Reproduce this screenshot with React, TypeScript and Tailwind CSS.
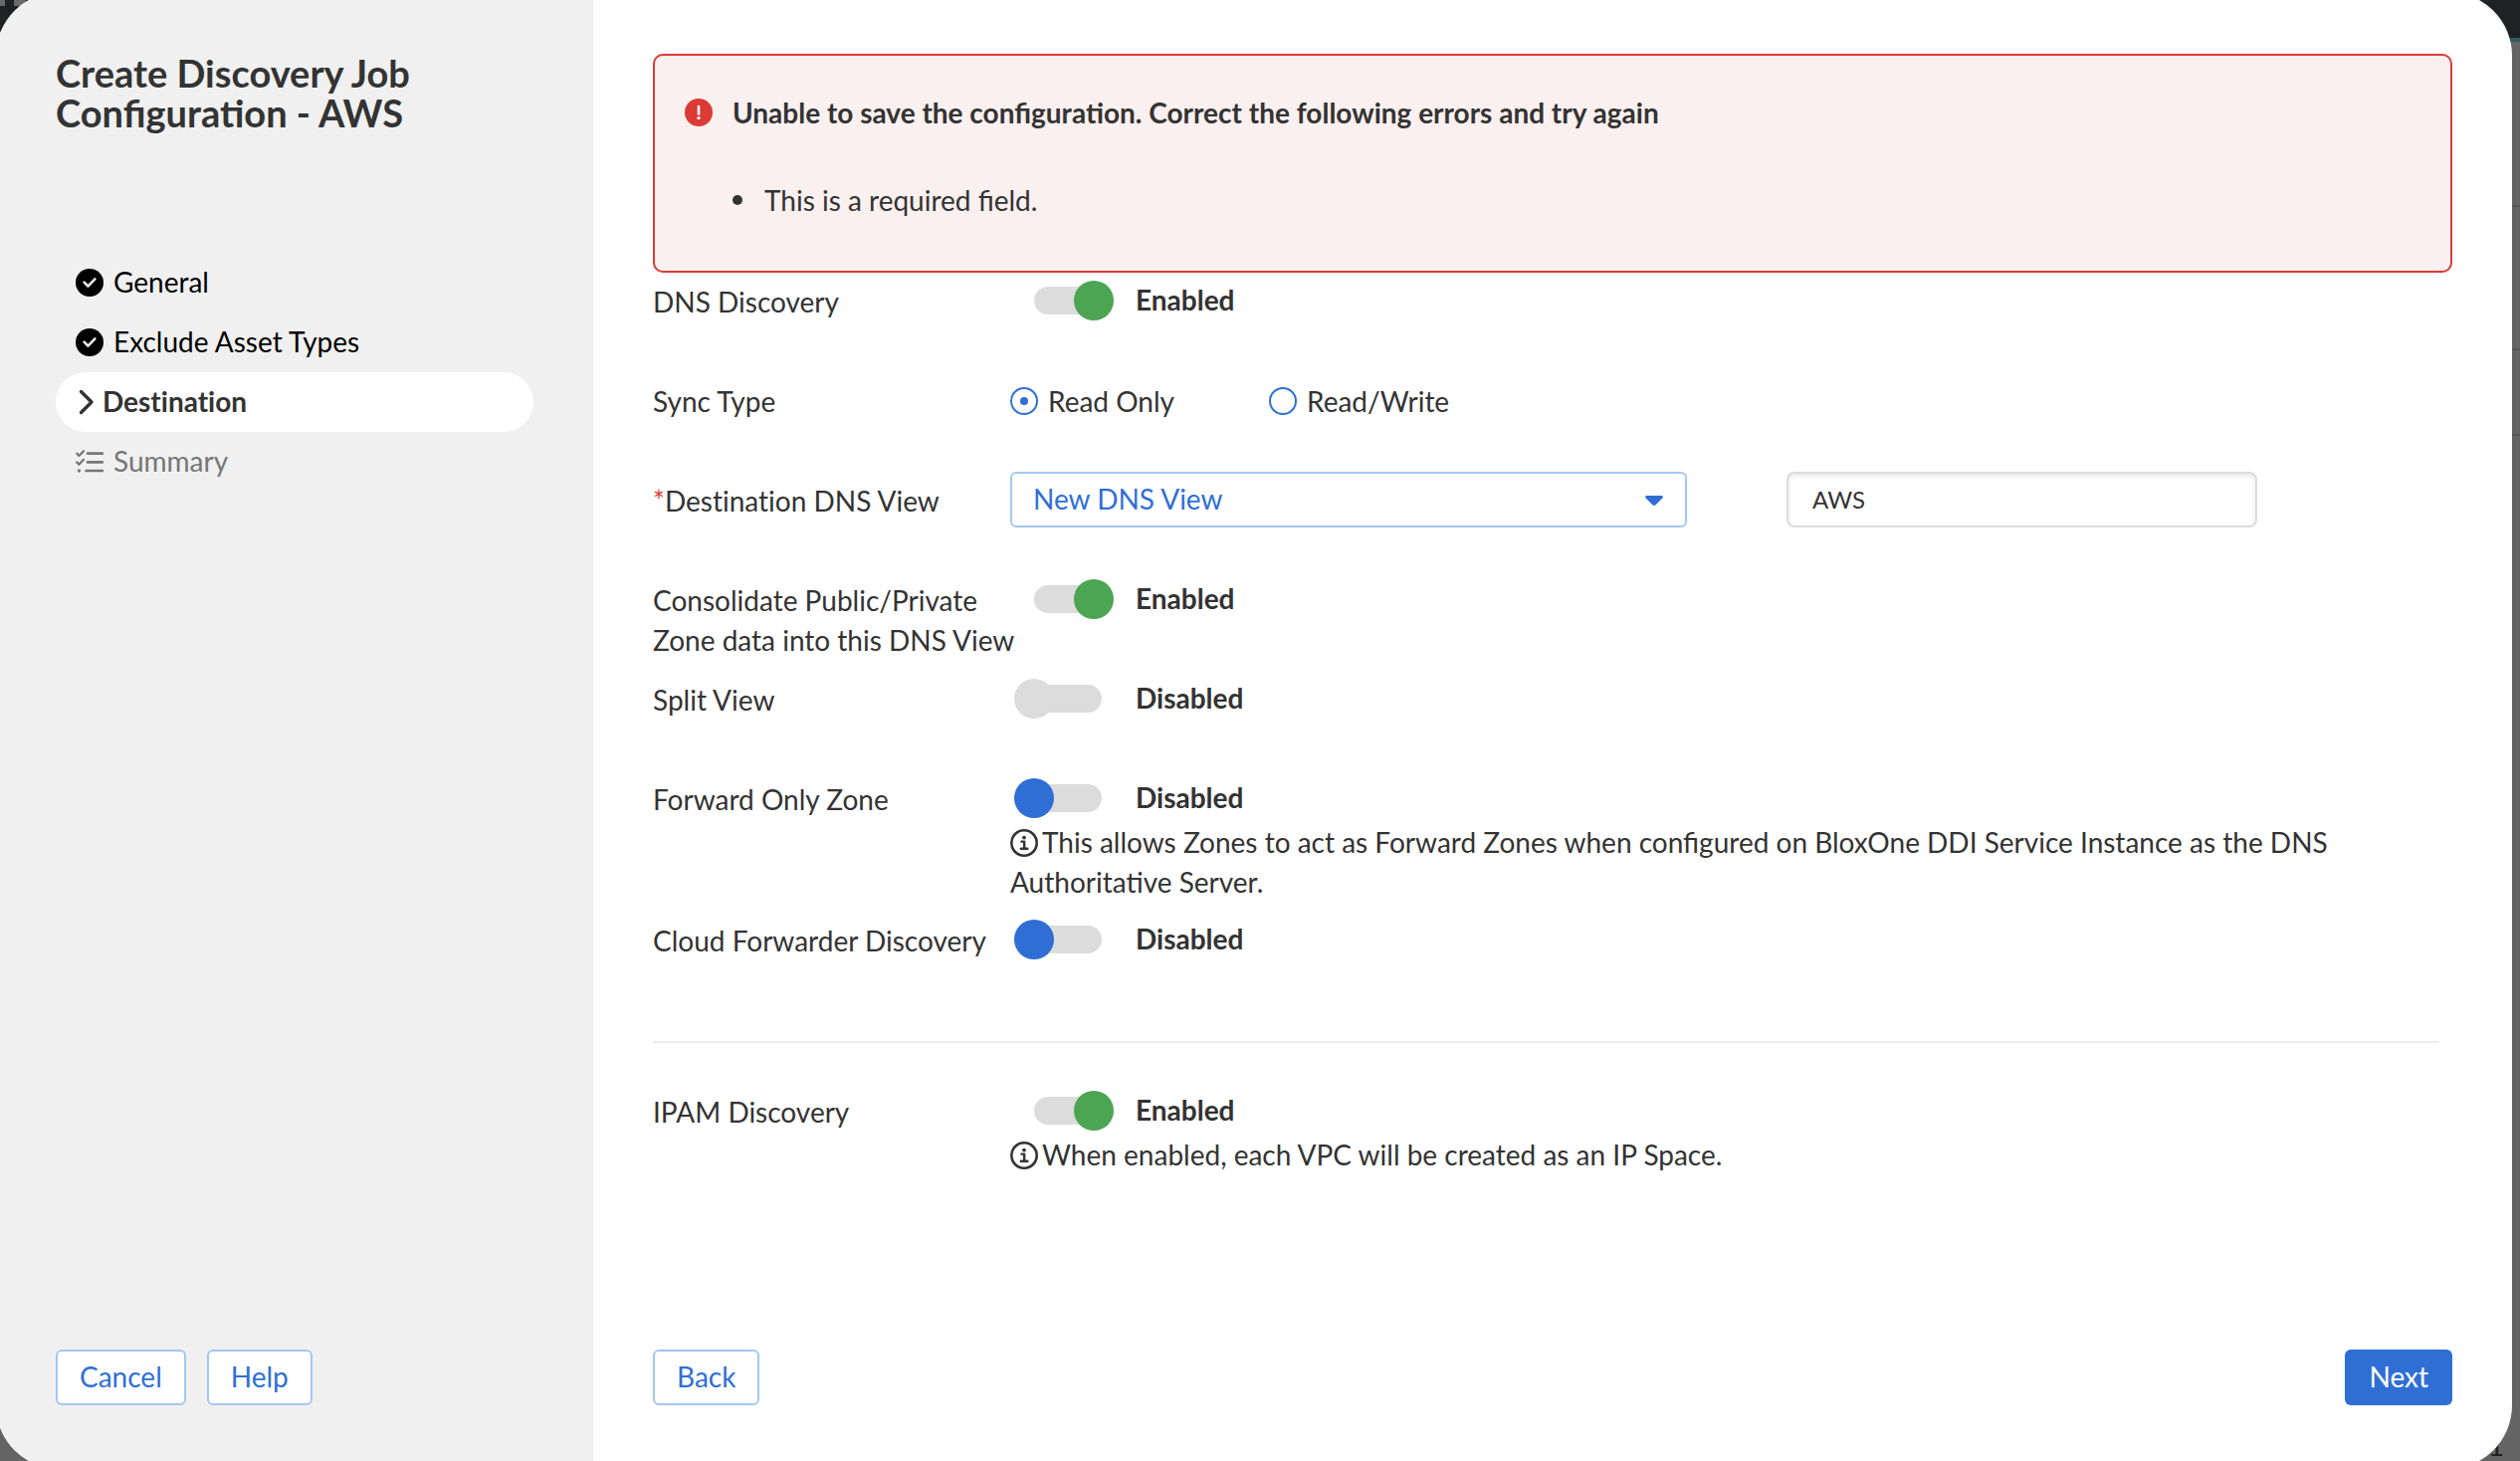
import React from "react";

function StepDone() {
  return (
    <svg viewBox="0 0 28 28" className="size-7 shrink-0" aria-hidden="true">
      <circle cx="14" cy="14" r="14" fill="#000" />
      <path d="M8.600 13.600l3.800 4 7-7.200" fill="none" stroke="#f0f0f0" strokeWidth="2.5" strokeLinecap="round" strokeLinejoin="round" />
    </svg>
  );
}

function StepCurrent() {
  return (
    <svg viewBox="0 0 16 26" className="h-[26px] w-4 shrink-0" aria-hidden="true">
      <path d="M2.500 2.500L13 13 2.500 23.500" fill="none" stroke="#333" strokeWidth="3.4" strokeLinecap="round" strokeLinejoin="round" />
    </svg>
  );
}

function StepPending() {
  return (
    <svg viewBox="0 0 28 24" className="h-6 w-7 shrink-0" fill="none" stroke="#767676" strokeWidth="2.6" strokeLinecap="round" strokeLinejoin="round" aria-hidden="true">
      <path d="M12 3.600h15M12 12.400h15M10.500 21h16.500" />
      <path d="M1.200 3.600l2.200 2.400L8 1.200M1.200 12.400l2.200 2.400L8 9.800" strokeWidth="2.2" />
      <circle cx="3.4" cy="21" r="1.7" fill="#767676" stroke="none" />
    </svg>
  );
}

function InfoIcon() {
  return (
    <svg viewBox="0 0 28 28" className="mr-1 -mt-1.5 inline-block size-7 align-middle" aria-hidden="true">
      <circle cx="14" cy="14" r="12.7" fill="none" stroke="#333" strokeWidth="2.6" />
      <circle cx="14" cy="8.6" r="1.9" fill="#333" />
      <path d="M11.400 12.600h2.800v7M10.800 19.800h6.600" fill="none" stroke="#333" strokeWidth="2.4" strokeLinecap="round" strokeLinejoin="round" />
    </svg>
  );
}

function Switch({ id, on, disabled }: { id: string; on?: boolean; disabled?: boolean }) {
  return (
    <div className="flex h-[52px] items-center pt-1 pl-6">
      <input
        id={id}
        type="checkbox"
        role="switch"
        defaultChecked={on}
        disabled={disabled}
        className="relative h-7 w-[68px] shrink-0 appearance-none rounded-full bg-[#dcdcdc] before:absolute before:-top-1.5 before:-left-5 before:size-10 before:rounded-full before:bg-[#2f6fd5] before:content-[''] checked:before:left-10 checked:before:bg-[#4ca553] disabled:before:bg-[#dcdcdc]"
      />
      <label htmlFor={id} className="pb-0.5 pl-[34px] font-bold">
        {on ? "Enabled" : "Disabled"}
      </label>
    </div>
  );
}

function Row({ label, htmlFor, children }: { label: React.ReactNode; htmlFor?: string; children: React.ReactNode }) {
  return (
    <div className="grid min-h-[100px] grid-cols-[359px_1fr]">
      <div className="pt-[9px] whitespace-nowrap [font-variant-ligatures:none]">
        {htmlFor ? <label htmlFor={htmlFor}>{label}</label> : <span>{label}</span>}
      </div>
      <div>{children}</div>
    </div>
  );
}

function Radio({ label, checked }: { label: string; checked?: boolean }) {
  return (
    <label className="flex w-[260px] items-center gap-2.5">
      <input
        type="radio"
        name="sync-type"
        defaultChecked={checked}
        className="grid size-7 appearance-none place-items-center rounded-full border-2 border-[#2f6fd5] before:size-2 before:rounded-full before:content-[''] checked:before:bg-[#2f6fd5]"
      />
      {label}
    </label>
  );
}

const outline = "h-14 rounded-md border-2 border-[#a3c7f2] bg-white px-[22px] pb-0.5 text-[#2f6fd5]";

export default function App() {
  return (
    <div className="relative min-h-screen overflow-hidden bg-[#646464] font-[Lato,sans-serif] text-[28px] leading-10 text-[#333]">
      <div className="absolute inset-x-0 top-0 flex h-[42px] gap-[9px] border-b-4 border-[#35595b] bg-[#1f2124]">
        <div className="h-1.5 w-[5px] bg-[#6a6a6a]" />
        <div className="h-1.5 w-3 bg-[#6a6a6a]" />
      </div>
      <div className="absolute top-[42px] right-0 w-2">
        <div className="h-[166px] border-b-2 border-[#555]" />
        <div className="h-36 border-b-2 border-[#555]" />
        <div className="h-[86px] border-b-2 border-[#555]" />
      </div>
      <div className="absolute right-4 bottom-0 leading-8 text-[#222]">1</div>

      <div className="relative -mt-2 mr-2 -mb-2 -ml-1 flex min-h-[calc(100vh+16px)] overflow-hidden rounded-[64px] bg-white">
        <aside className="flex w-[600px] shrink-0 flex-col bg-[#f0f0f0] pt-[61px] pr-[60px] pb-16 pl-[60px]">
          <h1 className="text-[38px] leading-10 font-bold">
            Create Discovery Job
            <br />
            Configuration - AWS
          </h1>
          <nav className="mt-[121px] [font-variant-ligatures:none]">
            <ol>
              <li className="flex h-[60px] items-center gap-2.5 pl-5 text-black"><StepDone /><span className="pb-0.5">General</span></li>
              <li className="flex h-[60px] items-center gap-2.5 pl-5 text-black"><StepDone /><span className="pb-0.5">Exclude Asset Types</span></li>
              <li aria-current="step" className="flex h-[60px] items-center gap-2 rounded-full bg-white pl-[23px] font-bold"><StepCurrent /><span className="pb-0.5">Destination</span></li>
              <li className="flex h-[60px] items-center gap-2.5 pl-5 text-[#767676]"><StepPending /><span className="pb-0.5">Summary</span></li>
            </ol>
          </nav>
          <div className="mt-auto flex gap-[21px]">
            <button type="button" className={outline}>Cancel</button>
            <button type="button" className={outline}>Help</button>
          </div>
        </aside>

        <main className="flex min-w-0 flex-1 flex-col pt-[62px] pr-[60px] pb-16 pl-[60px]">
          <div role="alert" className="h-[220px] rounded-[10px] border-2 border-[#dc3a35] bg-[#faf0ef] px-[30px] pt-[37px]">
            <div className="flex items-center gap-5 font-bold">
              <svg viewBox="0 0 28 28" className="size-7" aria-hidden="true">
                <circle cx="14" cy="14" r="14" fill="#dc3a35" />
                <path d="M14 8v7.400" stroke="#fff" strokeWidth="2.6" strokeLinecap="round" />
                <circle cx="14" cy="19.6" r="1.7" fill="#fff" />
              </svg>
              Unable to save the configuration. Correct the following errors and try again
            </div>
            <ul className="mt-12 pl-12">
              <li className="flex items-center gap-[22px] before:size-2.5 before:rounded-full before:bg-[#333] before:content-['']">This is a required field.</li>
            </ul>
          </div>

          <form className="mr-3.5">
            <Row label="DNS Discovery" htmlFor="dns"><Switch id="dns" on /></Row>
            <Row label="Sync Type">
              <div className="flex pt-[9px]">
                <Radio label="Read Only" checked />
                <Radio label="Read/Write" />
              </div>
            </Row>
            <Row
              htmlFor="view"
              label={<><span className="text-[#dc3a35]">*</span>Destination DNS View</>}
            >
              <div className="flex gap-[100px]">
                <div className="relative w-[680px]">
                  <select id="view" className="block h-14 w-full appearance-none rounded-md border-2 border-[#a3c7f2] bg-white px-[21px] pb-0.5 text-[#2f6fd5]">
                    <option>New DNS View</option>
                  </select>
                  <svg viewBox="0 0 18 10" className="pointer-events-none absolute top-6 right-6 h-2.5 w-[18px]" aria-hidden="true">
                    <path d="M1.400 0h15.200q2 .8.8 2.400l-6.800 6.800q-1.600 1.400-3.200 0L.6 2.400Q-.6.800 1.400 0z" fill="#2f6fd5" />
                  </svg>
                </div>
                <input aria-label="DNS view name" defaultValue="AWS" className="h-14 w-[473px] rounded-lg border-2 border-[#dcdcdc] bg-white px-6 pb-0.5 text-[24px] shadow-[inset_0_2px_4px_rgba(0,0,0,0.1)]" />
              </div>
            </Row>
            <Row htmlFor="consolidate" label={<>Consolidate Public/Private<br />Zone data into this DNS View</>}>
              <Switch id="consolidate" on />
            </Row>
            <Row label="Split View" htmlFor="split"><Switch id="split" disabled /></Row>
            <Row label="Forward Only Zone" htmlFor="forward">
              <Switch id="forward" />
              <p className="pb-2.5"><InfoIcon />This allows Zones to act as Forward Zones when configured on BloxOne DDI Service Instance as the DNS Authoritative Server.</p>
            </Row>
            <Row label="Cloud Forwarder Discovery" htmlFor="cloud"><Switch id="cloud" /></Row>
            <hr className="mt-[30px] mb-10 border-t-2 border-[#ececec]" />
            <Row label="IPAM Discovery" htmlFor="ipam">
              <Switch id="ipam" on />
              <p><InfoIcon />When enabled, each VPC will be created as an IP Space.</p>
            </Row>
          </form>

          <div className="mt-auto flex justify-between">
            <button type="button" className={outline}>Back</button>
            <button type="button" className="h-14 rounded-md bg-[#2f6fd5] px-6 pb-0.5 text-white">Next</button>
          </div>
        </main>
      </div>
    </div>
  );
}
